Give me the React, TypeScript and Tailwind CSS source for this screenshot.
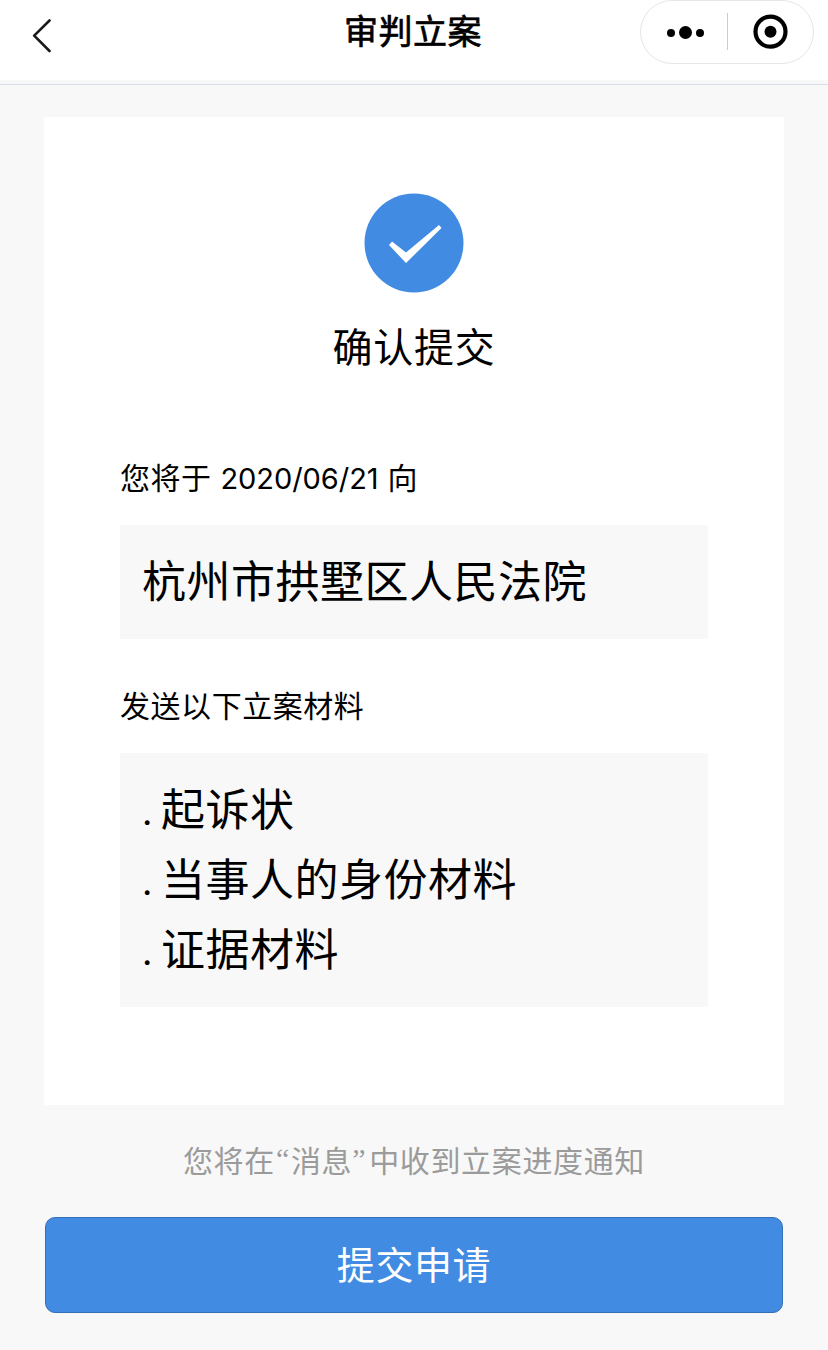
const materials = ['起诉状', '当事人的身份材料', '证据材料'];

function NavBar() {
  return (
    <header className="relative flex h-20 justify-center bg-white">
      <button className="absolute left-[31px] top-[18px]" aria-label="返回">
        <svg width="20" height="36" viewBox="0 0 20 36" fill="none">
          <path
            d="M18.5 2.5L3.2 17.7L18.5 33"
            stroke="#1a1a1a"
            strokeWidth="2.6"
            strokeLinecap="round"
            strokeLinejoin="round"
          />
        </svg>
      </button>

      <h1 className="pr-[2px] pt-[7px] text-[34px] leading-[50px] tracking-[0.5px] [-webkit-text-stroke:0.7px_black]">
        审判立案
      </h1>

      {/* Mini program capsule */}
      <div className="absolute right-[14px] top-0 flex h-16 w-[174px] items-center rounded-full border border-[#e6e6e6] bg-white">
        <button className="flex w-[86px] justify-center pl-1" aria-label="更多">
          <svg width="40" height="16" viewBox="0 0 40 16">
            <circle cx="5" cy="9" r="4" />
            <circle cx="19.5" cy="8.5" r="6.5" />
            <circle cx="34" cy="9" r="4" />
          </svg>
        </button>
        <span className="h-[37px] w-px -translate-y-px bg-[#cccccc]" />
        <button className="flex flex-1 justify-center" aria-label="关闭">
          <svg width="36" height="36" viewBox="0 0 36 36">
            <circle cx="17.5" cy="17.7" r="15" fill="none" stroke="#000" strokeWidth="4.2" />
            <circle cx="17.5" cy="17.7" r="6" />
          </svg>
        </button>
      </div>
    </header>
  );
}

export default function App() {
  return (
    <div className="h-[1350px] w-[828px] overflow-hidden bg-[#f8f8f8] font-['Inter','Noto_Sans_CJK_SC',sans-serif] text-black">
      <NavBar />
      <div className="mt-1 h-px bg-[#d8dfe9]" />

      <main className="mx-11 mt-8 h-[988px] bg-white px-[76px] pt-[76px]">
        {/* Status */}
        <div className="flex flex-col items-center">
          <svg width="100" height="100" viewBox="0 0 100 100">
            <circle cx="50" cy="50" r="49.5" fill="#418ce2" />
            <path d="M25 52L28 48.5L42 59.5L75 32L77.5 35L42 70Z" fill="#fff" />
          </svg>
          <h2 className="mt-[25px] text-[40px] leading-[60px] tracking-[0.7px]">确认提交</h2>
        </div>

        <p className="mt-[78px] text-[30px] leading-[44px] tracking-[0.5px]">
          您将于 <span className="text-[29px] tracking-[-0.05px]">2020/06/21</span> 向
        </p>
        <div className="mt-[24px] flex h-[114px] items-center bg-[#f8f8f8] px-[22px] text-[44px] tracking-[0.5px]">
          杭州市拱墅区人民法院
        </div>

        <p className="mt-[45px] text-[30px] leading-[44px] tracking-[0.55px]">发送以下立案材料</p>
        <ul className="mt-[25px] h-[254px] bg-[#f8f8f8] px-[22px] pt-[22px] text-[44px] leading-[70px] tracking-[0.5px]">
          {materials.map((name) => (
            <li key={name} className="flex h-[70px]">
              <span className="w-[19px] pt-[2px] text-[36px]">.</span>
              {name}
            </li>
          ))}
        </ul>
      </main>

      <p className="mt-[32px] h-11 text-center font-['Noto_Sans_CJK_SC',sans-serif] text-[30px] leading-[44px] tracking-[0.65px] text-[#9b9b9b]">
        您将在
        <span className="pl-px pr-px align-[3px] font-['Liberation_Serif'] leading-none">“</span>
        消息
        <span className="pr-[3px] align-[3px] font-['Liberation_Serif'] leading-none">”</span>
        中收到立案进度通知
      </p>
      <button className="mx-[45px] mt-[36px] flex h-24 w-[738px] items-center justify-center rounded-[10px] border border-[#3470b5] bg-[#418ce2] text-[38px] tracking-[0.6px] text-white">
        提交申请
      </button>
    </div>
  );
}
